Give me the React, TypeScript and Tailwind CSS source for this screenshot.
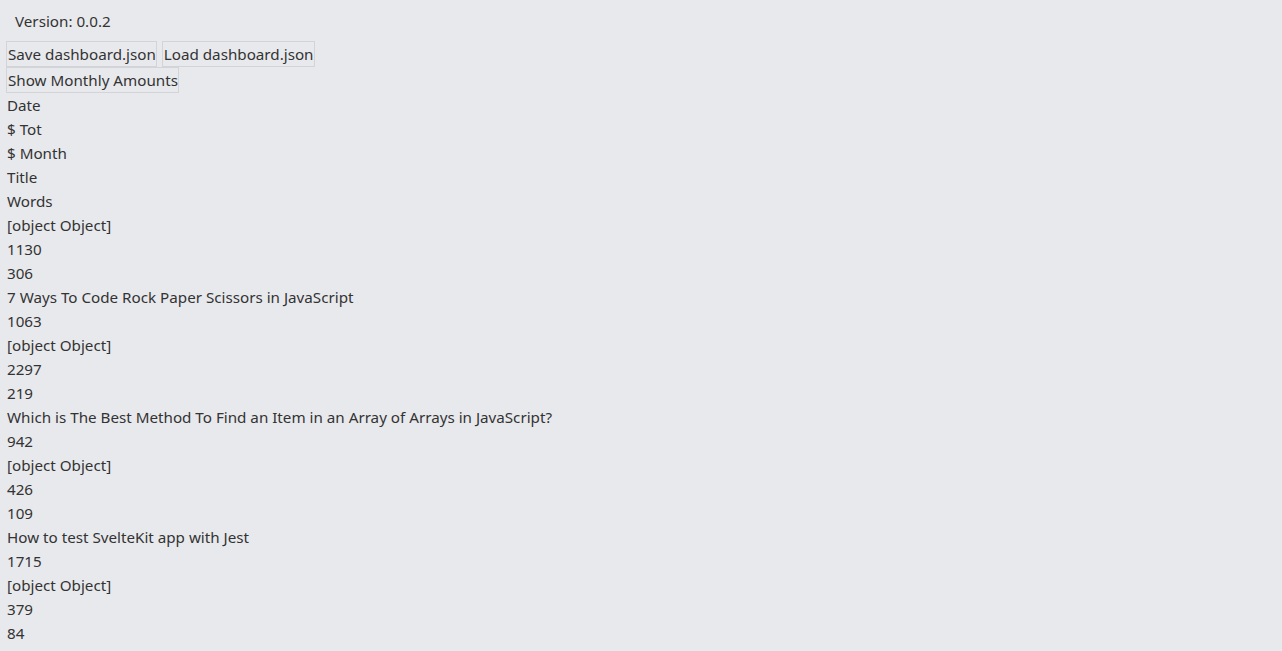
import React from "react";

type Post = {
  tot: number;
  month: number;
  title: string;
  words: number;
};

const posts: Post[] = [
  { tot: 1130, month: 306, title: "7 Ways To Code Rock Paper Scissors in JavaScript", words: 1063 },
  { tot: 2297, month: 219, title: "Which is The Best Method To Find an Item in an Array of Arrays in JavaScript?", words: 942 },
  { tot: 426, month: 109, title: "How to test SvelteKit app with Jest", words: 1715 },
  { tot: 379, month: 84, title: "", words: 0 },
];

const headers = ["Date", "$ Tot", "$ Month", "Title", "Words"];

const App: React.FC = () => {
  const cells: string[] = [];
  posts.forEach((p, i) => {
    cells.push("[object Object]", String(p.tot), String(p.month));
    if (i < posts.length - 1) {
      cells.push(p.title, String(p.words));
    }
  });

  return (
    <div className="min-h-screen w-full bg-[#e8e9ed] text-[#333333] font-['Noto_Sans',sans-serif] text-[15.2px] leading-6 px-[7px] overflow-hidden">
      <div className="pt-[9px] pl-2 pb-2">Version: 0.0.2</div>
      <div className="flex gap-[5px]">
        <button className="border border-[#d3d4d8] bg-[#e8e9ed] leading-6 -ml-px pl-px pr-0">Save dashboard.json</button>
        <button className="border border-[#d3d4d8] bg-[#e8e9ed] leading-6 pl-px pr-0">Load dashboard.json</button>
      </div>
      <div className="flex">
        <button className="border border-[#d3d4d8] bg-[#e8e9ed] leading-6 -ml-px pl-px pr-0">Show Monthly Amounts</button>
      </div>
      <div>
        {headers.map((h) => (
          <div key={h}>{h}</div>
        ))}
        {cells.map((c, i) => (
          <div key={i}>{c}</div>
        ))}
      </div>
    </div>
  );
};

export default App;
